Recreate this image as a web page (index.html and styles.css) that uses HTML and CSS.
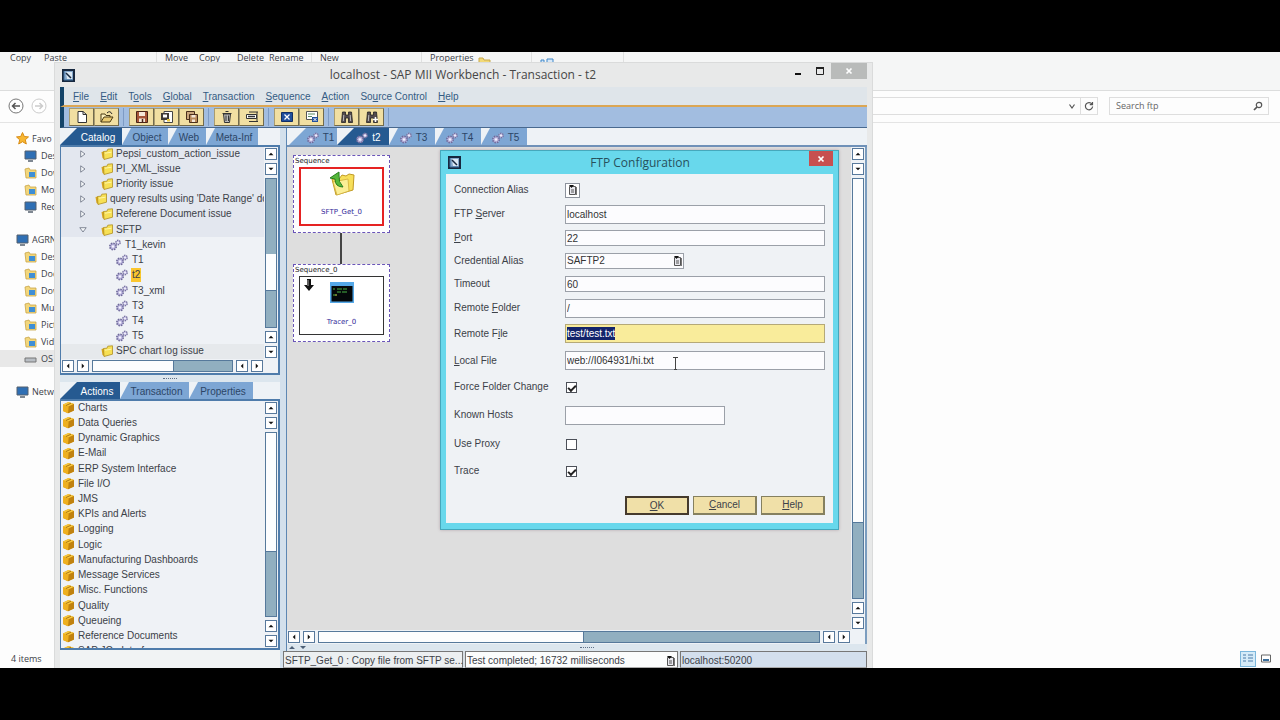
FILE: index.html
```html
<!DOCTYPE html>
<html lang="en">
<head>
<meta charset="utf-8">
<title>SAP MII Workbench</title>
<link rel="stylesheet" href="styles.css">
</head>
<body>
<svg class="sprites" aria-hidden="true">
  <symbol id="gear" viewBox="0 0 14 12"><circle cx="5" cy="7.500" r="3.200" fill="#b9b3dc" stroke="#6e6a9a" stroke-width="1.600" stroke-dasharray="1.500 1"/><circle cx="5" cy="7.500" r="1.200" fill="#f4f2ff"/><circle cx="10" cy="3.500" r="2.200" fill="#c9c3e8" stroke="#77739f" stroke-width="1.400" stroke-dasharray="1.300 .8"/><circle cx="10" cy="3.500" r=".8" fill="#fff"/></symbol>
  <symbol id="folder" viewBox="0 0 12 12"><path d="M.5 4l2.500-.5v7.500l-1.500-1z" fill="#d8a51c"/><path d="M2.500 3.500l3.500-.3.800-2L11.500.8v8.400L3 11.500z" fill="#f7e055" stroke="#b08f22" stroke-width=".8"/><path d="M4 5.200l6.500-1" stroke="#fff6a8"/></symbol>
  <symbol id="cube" viewBox="0 0 13 13"><path d="M1 3.500L6.500 1 12 3v6.500L6 12.300 1 10z" fill="#e0a010"/><path d="M1 3.500L6.500 1 12 3 6.500 5.500z" fill="#f6c63c"/><path d="M6.500 5.500L12 3v6.500L6 12.300z" fill="#c08210"/><path d="M1 3.500l5.500 2L6 12.300 1 10z" fill="#eeb020"/><path d="M4 4.500l5-2.300" stroke="#98630a" stroke-width=".8"/></symbol>
  <symbol id="up" viewBox="0 0 12 12"><path d="M3 7.500h6L6 4.500z" fill="#111"/></symbol>
  <symbol id="down" viewBox="0 0 12 12"><path d="M3 4.500h6L6 7.500z" fill="#111"/></symbol>
  <symbol id="left" viewBox="0 0 12 12"><path d="M7.500 3v6L4.500 6z" fill="#111"/></symbol>
  <symbol id="right" viewBox="0 0 12 12"><path d="M4.500 3v6L7.500 6z" fill="#111"/></symbol>
  <symbol id="app" viewBox="0 0 13 13"><path d="M0 0h13v13H0z" fill="#17283f"/><path d="M2 2h9v9H2z" fill="#86a9cc"/><path d="M4 3h6v7H5z" fill="#dce9f4"/><path d="M4 4l5 5" stroke="#17283f" stroke-width="1.500"/><path d="M2 2v9h9" fill="none" stroke="#3d6c9b"/></symbol>
  <symbol id="pick" viewBox="0 0 9 10"><path d="M1.500 1.500h6v8h-6z" fill="#e8e8ee" stroke="#555"/><path d="M1 0h5L3.500 3z" fill="#111"/><path d="M3 5h3M3 7h3" stroke="#555"/><path d="M8.500 2v8" stroke="#777"/></symbol>
  <symbol id="closed" viewBox="0 0 6 8"><path d="M.7.8v6.400L5 4z" fill="#f5f7fa" stroke="#687080" stroke-width=".8"/></symbol>
  <symbol id="opened" viewBox="0 0 8 6"><path d="M.8.7h6.400L4 5z" fill="#f5f7fa" stroke="#687080" stroke-width=".8"/></symbol>
  <symbol id="place" viewBox="0 0 13 12"><path d="M1 2l4-1 1 2h6v8H2z" fill="#f3d77c" stroke="#c9a548" stroke-width=".8"/><path d="M5 5h6v5H5z" fill="#3f8fd6"/></symbol>
  <symbol id="monitor" viewBox="0 0 13 12"><path d="M1 1h11v8H1z" fill="#2f6fb4" stroke="#55606e"/><path d="M4 11h5" stroke="#55606e" stroke-width="1.500"/></symbol>
</svg>

<main class="desktop">
  <section class="explorer" aria-label="File explorer">
    <div class="ribbon">
      <button class="rb">Copy</button><button class="rb rb-paste">Paste</button><span class="sep"></span><button class="rb">Move</button><button class="rb rb-copy">Copy</button><button class="rb rb-del">Delete</button><button class="rb rb-ren">Rename</button><span class="sep"></span><button class="rb rb-new">New</button><span class="sep tight"></span><button class="rb rb-prop">Properties</button>
      <svg class="rb-bit" width="14" height="11" viewBox="0 0 14 11"><path d="M1 6h4l1 2h6v6H1z" fill="#f2d976" stroke="#c7a94d"/></svg>
      <span class="sep"></span>
      <svg class="rb-bit2" width="14" height="11" viewBox="0 0 14 11"><path d="M1 8h3v4H1zM7 7h6v7H7z" fill="#d7e8f8" stroke="#3c86c8"/></svg>
      <span class="sep"></span>
    </div>
    <div class="address">
      <button class="nav-btn" aria-label="Back"><svg width="16" height="16" viewBox="0 0 16 16"><circle cx="8" cy="8" r="7" fill="#fff" stroke="#777"/><path d="M12 8H4.500M7.500 5l-3 3 3 3" fill="none" stroke="#555" stroke-width="1.500"/></svg></button>
      <button class="nav-btn" aria-label="Forward"><svg width="16" height="16" viewBox="0 0 16 16"><circle cx="8" cy="8" r="7" fill="#fff" stroke="#ccc"/><path d="M4 8h7.500M8.500 5l3 3-3 3" fill="none" stroke="#ccc" stroke-width="1.500"/></svg></button>
      <div class="path">
        <button class="path-btn" aria-label="History"><svg width="8" height="8" viewBox="0 0 8 8"><path d="M1.500 2.500L4 6l2.500-3.500" fill="none" stroke="#555" stroke-width="1.200"/></svg></button>
        <button class="path-btn refresh" aria-label="Refresh"><svg width="10" height="10" viewBox="0 0 10 10"><path d="M8 3.200A3.600 3.600 0 1 0 8.600 5.500M8.500 1v2.700H5.800" fill="none" stroke="#555" stroke-width="1.200"/></svg></button>
      </div>
      <div class="search"><input type="text" aria-label="Search ftp" placeholder="Search ftp"><svg width="10" height="10" viewBox="0 0 10 10"><circle cx="6" cy="4" r="2.700" fill="none" stroke="#555" stroke-width="1.200"/><path d="M4 6L1 9" stroke="#555" stroke-width="1.700"/></svg></div>
    </div>
    <ul class="places">
      <li class="head"><svg width="13" height="13" viewBox="0 0 13 13"><path d="M6.500.5l1.800 4 4.200.4-3.200 2.900 1 4.200-3.800-2.300L2.700 12l1-4.200L.5 4.900l4.200-.4z" fill="#f7b733" stroke="#d98c14"/></svg>Favo</li>
      <li><svg width="13" height="12"><use href="#monitor"/></svg>Des</li>
      <li><svg width="13" height="12"><use href="#place"/></svg>Dow</li>
      <li><svg width="13" height="12"><use href="#place"/></svg>Mob</li>
      <li><svg width="13" height="12"><use href="#monitor"/></svg>Rec</li>
      <li class="head gap"><svg width="13" height="12"><use href="#monitor"/></svg>AGRN</li>
      <li><svg width="13" height="12"><use href="#place"/></svg>Des</li>
      <li><svg width="13" height="12"><use href="#place"/></svg>Doc</li>
      <li><svg width="13" height="12"><use href="#place"/></svg>Dow</li>
      <li><svg width="13" height="12"><use href="#place"/></svg>Mus</li>
      <li><svg width="13" height="12"><use href="#place"/></svg>Pict</li>
      <li><svg width="13" height="12"><use href="#place"/></svg>Vide</li>
      <li class="current"><svg width="13" height="12" viewBox="0 0 13 12"><path d="M1 5h11v4H1z" fill="#b9bec4" stroke="#777"/></svg>OS (</li>
      <li class="head gap"><svg width="13" height="12"><use href="#monitor"/></svg>Netw</li>
    </ul>
    <div class="ex-status"><span>4 items</span>
      <div class="views"><button class="view on" aria-label="Details"><svg width="12" height="11" viewBox="0 0 12 11"><path d="M1 2h3M1 5h3M1 8h3M6 2h5M6 5h5M6 8h5" stroke="#4a7ba8"/></svg></button><button class="view" aria-label="Large icons"><svg width="12" height="11" viewBox="0 0 12 11"><path d="M1.500 2h9v7h-9z" fill="#fff" stroke="#666"/><path d="M3 6h6v2H3z" fill="#3b6e9b"/></svg></button></div>
    </div>
  </section>

  <section class="window" aria-label="SAP MII Workbench">
    <header class="titlebar">
      <svg width="13" height="13"><use href="#app"/></svg>
      <h1>localhost - SAP MII Workbench - Transaction - t2</h1>
      <div class="win-ctl"><button aria-label="Minimize"><svg width="10" height="10" viewBox="0 0 10 10"><path d="M2 8h6" stroke="#111" stroke-width="2"/></svg></button><button aria-label="Maximize"><svg width="10" height="10" viewBox="0 0 10 10"><path d="M1.500 2.500h7v6h-7z" fill="none" stroke="#222"/><path d="M1 2h8" stroke="#222" stroke-width="2"/></svg></button><button class="close" aria-label="Close"><svg width="10" height="10" viewBox="0 0 10 10"><path d="M2.500 2.500l5 5M7.500 2.500l-5 5" stroke="#fff" stroke-width="1.700"/></svg></button></div>
    </header>
    <nav class="menu"><button><u>F</u>ile</button><button><u>E</u>dit</button><button>T<u>o</u>ols</button><button><u>G</u>lobal</button><button><u>T</u>ransaction</button><button><u>S</u>equence</button><button><u>A</u>ction</button><button>So<u>u</u>rce Control</button><button><u>H</u>elp</button></nav>
    <div class="toolbar">
      <div class="group">
        <button aria-label="New"><svg width="14" height="14" viewBox="0 0 14 14"><path d="M3 1.500h5l3.500 3V12.500H3z" fill="#fff" stroke="#333"/><path d="M8 1.500v3h3.500" fill="none" stroke="#333"/></svg></button>
        <button aria-label="Open"><svg width="14" height="14" viewBox="0 0 14 14"><path d="M1 12V4h4l1 1.500h4V7" fill="#fff3c0" stroke="#4a3b14"/><path d="M1 12l3-5h9l-3 5z" fill="#eacb72" stroke="#4a3b14"/><path d="M7 3q3-3 5 1" fill="none" stroke="#222"/></svg></button>
      </div>
      <div class="group">
        <button aria-label="Save"><svg width="14" height="14" viewBox="0 0 14 14"><path d="M1.500 1.500h11v11h-11z" fill="#a65639" stroke="#4a2418"/><path d="M4 2h6v4H4zM4 8.500h6V12H4z" fill="#f6e8d8"/><path d="M7.500 9v3" stroke="#4a2418" stroke-width="1.500"/></svg></button>
        <button aria-label="Save as"><svg width="14" height="14" viewBox="0 0 14 14"><path d="M4 1.500h8.500v11H4z" fill="#fff" stroke="#444"/><path d="M1 3h8v7H1z" fill="#3f3a36"/><path d="M3 4.500h4v3H3z" fill="#fff"/><path d="M7 9h3v2.500H7z" fill="#e8c840"/></svg></button>
        <button aria-label="Save all"><svg width="14" height="14" viewBox="0 0 14 14"><path d="M1.500 1.500h8v8h-8z" fill="#c9a57c" stroke="#4a2f1c"/><path d="M4.500 4.500h8v8h-8z" fill="#b98a5c" stroke="#4a2f1c"/><path d="M6.500 5h4v2.500h-4zM7 9.500h3V12H7z" fill="#f6e8d8"/></svg></button>
      </div>
      <div class="group">
        <button aria-label="Delete"><svg width="14" height="14" viewBox="0 0 14 14"><path d="M3.500 4h7l-1 8.500h-5z" fill="#bbb" stroke="#333"/><path d="M2.500 3.500h9M5.500 1.500h3M6 5.500v5.500M8.500 5.500v5.500" stroke="#333" fill="none"/></svg></button>
        <button aria-label="Rename"><svg width="14" height="14" viewBox="0 0 14 14"><path d="M1.500 4.500h10v4h-10z" fill="#fff" stroke="#333"/><path d="M3 6.500h7" stroke="#333" stroke-width="1.500"/><path d="M4 2h9M12 2v10M4 11.500h9" stroke="#333"/></svg></button>
      </div>
      <div class="group">
        <button aria-label="Close transaction"><svg width="14" height="14" viewBox="0 0 14 14"><path d="M1.500 2.500h11v9h-11z" fill="#214f9c" stroke="#132f63"/><path d="M4.500 4.500l5 5M9.500 4.500l-5 5" stroke="#fff" stroke-width="1.300"/></svg></button>
        <button aria-label="Close all"><svg width="14" height="14" viewBox="0 0 14 14"><path d="M1.500 1.500h11v8h-11z" fill="#fff" stroke="#555"/><path d="M3 4h7M3 6.500h4" stroke="#5b8a62"/><path d="M7 7h6v5H7z" fill="#214f9c"/><path d="M8.500 8l3 3M11.500 8l-3 3" stroke="#fff"/></svg></button>
      </div>
      <div class="group">
        <button aria-label="Find"><svg width="14" height="14" viewBox="0 0 14 14"><path d="M2.500 2h3v3h3V2h3l1 10.500H8.500V8h-3v4.500h-4z" fill="#544b50" stroke="#222" stroke-width=".8"/><path d="M3.800 5l-.5 6M10.200 5l.5 6" stroke="#bbb"/></svg></button>
        <button aria-label="Find next"><svg width="14" height="14" viewBox="0 0 14 14"><path d="M2.500 2h3v3h3V2h3l1 10.500H8.500V8h-3v4.500h-4z" fill="#544b50" stroke="#222" stroke-width=".8"/><path d="M3.800 5l-.5 6" stroke="#bbb"/><path d="M10.500 7v5M8 9.500h5" stroke="#fff" stroke-width="1.500"/></svg></button>
      </div>
    </div>
    <div class="work">
      <aside class="side">
        <div class="tabs"><button class="tab on w62">Catalog</button><button class="tab w46">Object</button><button class="tab w38">Web</button><button class="tab w52">Meta-Inf</button></div>
        <div class="panel tree-panel">
          <div class="scroll-row">
            <ul class="tree">
              <li class="f"><svg class="tw" width="8" height="8"><use href="#closed"/></svg><svg width="12" height="12"><use href="#folder"/></svg>Pepsi_custom_action_issue</li>
              <li class="f"><svg class="tw" width="8" height="8"><use href="#closed"/></svg><svg width="12" height="12"><use href="#folder"/></svg>PI_XML_issue</li>
              <li class="f"><svg class="tw" width="8" height="8"><use href="#closed"/></svg><svg width="12" height="12"><use href="#folder"/></svg>Priority issue</li>
              <li class="f near"><svg class="tw" width="8" height="8"><use href="#closed"/></svg><svg width="12" height="12"><use href="#folder"/></svg>query results using 'Date Range' do</li>
              <li class="f"><svg class="tw" width="8" height="8"><use href="#closed"/></svg><svg width="12" height="12"><use href="#folder"/></svg>Referene Document issue</li>
              <li class="f"><svg class="tw" width="8" height="6"><use href="#opened"/></svg><svg width="12" height="12"><use href="#folder"/></svg>SFTP</li>
              <li class="t out"><svg width="14" height="12"><use href="#gear"/></svg>T1_kevin</li>
              <li class="t"><svg width="14" height="12"><use href="#gear"/></svg>T1</li>
              <li class="t marked"><svg width="14" height="12"><use href="#gear"/></svg><mark>t2</mark></li>
              <li class="t"><svg width="14" height="12"><use href="#gear"/></svg>T3_xml</li>
              <li class="t"><svg width="14" height="12"><use href="#gear"/></svg>T3</li>
              <li class="t"><svg width="14" height="12"><use href="#gear"/></svg>T4</li>
              <li class="t"><svg width="14" height="12"><use href="#gear"/></svg>T5</li>
              <li class="f plain"><svg width="12" height="12"><use href="#folder"/></svg>SPC chart log issue</li>
            </ul>
            <div class="sb v"><button aria-label="Up"><svg><use href="#up"/></svg></button><button aria-label="Down"><svg><use href="#down"/></svg></button><div class="track t1"><div class="thumb"></div></div><button aria-label="Up"><svg><use href="#up"/></svg></button><button aria-label="Down"><svg><use href="#down"/></svg></button></div>
          </div>
          <div class="sb h end15"><button aria-label="Left"><svg><use href="#left"/></svg></button><button aria-label="Right"><svg><use href="#right"/></svg></button><div class="track t2"><div class="thumb"></div></div><button aria-label="Left"><svg><use href="#left"/></svg></button><button aria-label="Right"><svg><use href="#right"/></svg></button></div>
        </div>
        <div class="split-h"></div>
        <div class="tabs"><button class="tab on w60">Actions</button><button class="tab w69">Transaction</button><button class="tab w64">Properties</button></div>
        <div class="panel action-panel">
          <ul class="actions">
            <li><svg width="13" height="13"><use href="#cube"/></svg>Charts</li>
            <li><svg width="13" height="13"><use href="#cube"/></svg>Data Queries</li>
            <li><svg width="13" height="13"><use href="#cube"/></svg>Dynamic Graphics</li>
            <li><svg width="13" height="13"><use href="#cube"/></svg>E-Mail</li>
            <li><svg width="13" height="13"><use href="#cube"/></svg>ERP System Interface</li>
            <li><svg width="13" height="13"><use href="#cube"/></svg>File I/O</li>
            <li><svg width="13" height="13"><use href="#cube"/></svg>JMS</li>
            <li><svg width="13" height="13"><use href="#cube"/></svg>KPIs and Alerts</li>
            <li><svg width="13" height="13"><use href="#cube"/></svg>Logging</li>
            <li><svg width="13" height="13"><use href="#cube"/></svg>Logic</li>
            <li><svg width="13" height="13"><use href="#cube"/></svg>Manufacturing Dashboards</li>
            <li><svg width="13" height="13"><use href="#cube"/></svg>Message Services</li>
            <li><svg width="13" height="13"><use href="#cube"/></svg>Misc. Functions</li>
            <li><svg width="13" height="13"><use href="#cube"/></svg>Quality</li>
            <li><svg width="13" height="13"><use href="#cube"/></svg>Queueing</li>
            <li><svg width="13" height="13"><use href="#cube"/></svg>Reference Documents</li>
            <li><svg width="13" height="13"><use href="#cube"/></svg>SAP JCo Interface</li>
          </ul>
          <div class="sb v"><button aria-label="Up"><svg><use href="#up"/></svg></button><button aria-label="Down"><svg><use href="#down"/></svg></button><div class="track t3"><div class="thumb"></div></div><button aria-label="Up"><svg><use href="#up"/></svg></button><button aria-label="Down"><svg><use href="#down"/></svg></button></div>
        </div>
      </aside>
      <div class="split-v"></div>
      <section class="editor">
        <div class="tabs docs"><button class="tab first">T1</button><button class="tab on w52"><svg width="14" height="12"><use href="#gear"/></svg>t2</button><button class="tab w46"><svg width="14" height="12"><use href="#gear"/></svg>T3</button><button class="tab w46"><svg width="14" height="12"><use href="#gear"/></svg>T4</button><button class="tab w46"><svg width="14" height="12"><use href="#gear"/></svg>T5</button></div>
        <div class="canvas-box">
          <div class="scroll-row">
            <div class="canvas">
              <div class="seq"><span>Sequence</span>
                <div class="node picked"><svg width="28" height="26" viewBox="0 0 28 26"><path d="M4 8l7 0 3-4 4 1 3-2 5 1-1 15-17 5z" fill="#f7df5a" stroke="#c19a24"/><path d="M5 11l15-3 1 12-12 4z" fill="#fbee96" stroke="#d0ae3a" stroke-width=".8"/><path d="M2 7l9-6v3q-1 7 4 12-8 0-8-8z" fill="#55b83a" stroke="#267c1c"/></svg><b>SFTP_Get_0</b></div>
              </div>
              <div class="wire"></div>
              <div class="seq"><span>Sequence_0</span>
                <div class="node"><svg class="arrow" width="10" height="12" viewBox="0 0 10 12"><path d="M3 0h4v6h3l-5 6-5-6h3z" fill="#111"/><path d="M4 1v6" stroke="#aaa"/></svg><svg width="24" height="21" viewBox="0 0 24 21"><path d="M0 0h24v21H0z" fill="#55a8e8"/><path d="M1.500 4h21v15.500h-21z" fill="#05080a"/><path d="M3 7h2M7 7h5M13 7h4M7 10h4M12 10h5M3 13h2" stroke="#49b345"/><path d="M6 12v2" stroke="#d7e54a"/></svg><b>Tracer_0</b></div>
              </div>
            </div>
            <div class="sb v"><button aria-label="Up"><svg><use href="#up"/></svg></button><button aria-label="Down"><svg><use href="#down"/></svg></button><div class="track t4"><div class="thumb"></div></div><button aria-label="Up"><svg><use href="#up"/></svg></button><button aria-label="Down"><svg><use href="#down"/></svg></button></div>
          </div>
          <div class="sb h end15"><button aria-label="Left"><svg><use href="#left"/></svg></button><button aria-label="Right"><svg><use href="#right"/></svg></button><div class="track t5"><div class="thumb"></div></div><button aria-label="Left"><svg><use href="#left"/></svg></button><button aria-label="Right"><svg><use href="#right"/></svg></button></div>
        </div>
        <div class="split-h low"><svg width="20" height="5" viewBox="0 0 20 5"><path d="M2 4h6L5 1zM13 1h6l-3 3z" fill="#4d6077"/></svg></div>
        <footer class="status"><span class="s1">SFTP_Get_0 : Copy file from SFTP se...</span><span class="s2"><i>Test completed; 16732 milliseconds</i><svg width="9" height="10"><use href="#pick"/></svg></span><span class="s3">localhost:50200</span></footer>
      </section>
    </div>
  </section>

  <form class="dialog" aria-label="FTP Configuration">
    <header><svg width="13" height="13"><use href="#app"/></svg><h2>FTP Configuration</h2><button type="button" class="x" aria-label="Close"><svg width="10" height="10" viewBox="0 0 10 10"><path d="M2.500 2.500l5 5M7.500 2.500l-5 5" stroke="#fff" stroke-width="1.700"/></svg></button></header>
    <div class="body">
      <div class="fields">
        <label for="alias">Connection Alias</label><button id="alias" class="picker" type="button" aria-label="Connection Alias"><svg width="9" height="10"><use href="#pick"/></svg></button>
        <label for="server">FTP <u>S</u>erver</label><input id="server" type="text" class="tall" value="localhost">
        <label for="port"><u>P</u>ort</label><input id="port" type="text" value="22">
        <label for="cred">Credential Alias</label><div class="combo"><input id="cred" type="text" value="SAFTP2"><svg width="9" height="10"><use href="#pick"/></svg></div>
        <label for="timeout">Timeout</label><input id="timeout" type="text" value="60">
        <label for="rfolder">Remote <u>F</u>older</label><input id="rfolder" type="text" class="tall" value="/">
        <label for="rfile">Remote F<u>i</u>le</label><div id="rfile" class="edit tall" role="textbox" contenteditable="true" aria-label="Remote File"><span>test/test.txt</span></div>
        <label for="lfile"><u>L</u>ocal File</label><input id="lfile" type="text" class="tall" value="web://I064931/hi.txt">
        <label for="force">Force Folder Change</label><input id="force" type="checkbox" checked>
        <label for="hosts">Known Hosts</label><input id="hosts" type="text" class="tall short">
        <label for="proxy">Use Proxy</label><input id="proxy" type="checkbox">
        <label for="trace">Trace</label><input id="trace" type="checkbox" checked>
      </div>
      <div class="buttons"><button type="button" class="default"><u>O</u>K</button><button type="button"><u>C</u>ancel</button><button type="button"><u>H</u>elp</button></div>
    </div>
    <svg class="caret" width="7" height="13" viewBox="0 0 7 13"><path d="M1 .5h5M3.500 1v11.500M2 12.500h3" stroke="#444" fill="none"/></svg>
  </form>
</main>
<script src="tabs.js"></script>
</body>
</html>
```
FILE: tabs.js
```js
// Every document tab carries the transaction icon before its name.
document.querySelectorAll(".docs .tab").forEach(function (tab) {
  if (!tab.querySelector("svg")) {
    tab.insertAdjacentHTML("afterbegin", '<svg width="14" height="12"><use href="#gear"/></svg>');
  }
});
```
FILE: styles.css
```css
* { box-sizing: border-box; }
body { margin: 0; height: 100vh; padding: 52px 0; background: #000; font: 10px/12px "Liberation Sans", Arial, sans-serif; color: #3c4148; }
button, input { font: inherit; color: inherit; margin: 0; padding: 0; border: 0; border-radius: 0; background: none; }
ul { list-style: none; margin: 0; padding: 0; }
svg { display: block; flex: none; }
.sprites { position: absolute; width: 0; height: 0; }
.desktop { position: relative; height: 100%; overflow: hidden; background: #fdfdfd; }

/* File explorer behind the workbench */
.explorer { height: 100%; display: flex; flex-direction: column; font-family: "Open Sans", "Noto Sans", sans-serif; font-size: 9px; }
.ribbon { height: 39px; display: flex; align-items: flex-start; background: #f5f6f6; border-bottom: 1px solid #dcdddd; padding-left: 10px; }
.rb { text-align: left; line-height: 12px; width: 34px; flex: none; }
.rb-paste { width: 112px; }
.rb-copy { width: 38px; }
.rb-del { width: 32px; }
.rb-ren { width: 42px; }
.rb-new { width: 101px; }
.rb-prop { width: 48px; }
.sep { width: 1px; height: 39px; margin-right: 8px; background: #dfe0e0; }
.rb-bit { margin-right: 39px; }
.rb-bit2 { margin-right: 69px; }
.address { height: 32px; display: flex; align-items: center; gap: 7px; padding: 0 11px 2px 8px; border-bottom: 1px solid #e4e4e4; }
.path { flex: 1; height: 18px; display: flex; justify-content: flex-end; border: 1px solid #dedede; margin-right: 4px; }
.path-btn { width: 17px; display: grid; place-items: center; }
.refresh { border-left: 1px solid #dedede; }
.search { width: 160px; height: 18px; display: flex; align-items: center; border: 1px solid #dedede; padding: 0 5px 0 6px; }
.search input { flex: 1; min-width: 0; outline: 0; }
.search input::placeholder { color: #666; opacity: 1; }
.places { flex: 1; padding-top: 7px; }
.places li { height: 17px; display: flex; align-items: center; gap: 4px; padding-left: 24px; }
.places .head { padding-left: 16px; gap: 3px; }
.places .gap { margin-top: 16px; }
.places .current { background: linear-gradient(90deg, #e8e8e8 60px, transparent 60px); }
.ex-status { height: 19px; display: flex; justify-content: space-between; padding: 0 6px 0 11px; align-items: center; }
.views { display: flex; gap: 2px; }
.view { width: 16px; height: 16px; display: grid; place-items: center; }
.view.on { background: #d5ebf8; border: 1px solid #7cb7dc; }

/* Workbench window */
.window { position: absolute; left: 54px; top: 10px; bottom: 0; width: 819px; display: flex; flex-direction: column; background: #e8e9e9; padding: 0 5px; border: 1px solid #dadbdb; border-bottom: 0; }
.titlebar { height: 24px; flex: none; display: flex; align-items: center; padding-left: 2px; }
h1, h2 { margin: 0; flex: 1; text-align: center; font-weight: 400; font-size: 12px; color: #464646; font-family: "Open Sans", "Noto Sans", sans-serif; }
.titlebar h1 { padding-left: 64px; }
.win-ctl { display: flex; align-self: flex-start; }
.win-ctl button { width: 22px; height: 16px; display: grid; place-items: center; }
.win-ctl .close { width: 36px; background: #b9bbba; }
.menu { height: 20px; flex: none; display: flex; align-items: center; gap: 11px; padding: 2px 0 0 9px; border-left: 4px solid #144469; border-bottom: 2px solid #dba654; background: #dfe5ea; color: #345b83; }
.toolbar { height: 21px; flex: none; display: flex; align-items: center; gap: 5px; padding-left: 5px; border-left: 4px solid #144469; background: #a2bde0; border-bottom: 1px solid #49698f; }
.group { display: flex; padding-right: 4px; border-right: 1px solid #7e9bc4; }
.toolbar button { width: 25px; height: 18px; display: grid; place-items: center; background: #f1dfa2; border: 1px solid #716a4d; border-top-color: #a99c70; border-left-color: #a99c70; }
.work { flex: 1; min-height: 0; display: flex; background: #d9e4ee; }
.side { width: 220px; flex: none; display: flex; flex-direction: column; padding-bottom: 18px; background: #f1f3f4; }
.tabs { height: 17px; flex: none; display: flex; background: #eef2f6; }
.tab { background: #7da6d4; clip-path: polygon(9px 0, 100% 0, 100% 100%, 0 100%); color: #2c4566; padding: 2px 0 0 4px; text-align: center; display: flex; align-items: center; justify-content: center; gap: 3px; }
.tab.on { background: #265a91; color: #fff; clip-path: polygon(17px 0, 100% 0, 100% 100%, 0 100%); padding-left: 14px; }
.w38 { width: 38px; }
.w46 { width: 46px; }
.w52 { width: 52px; }
.w60 { width: 60px; }
.w62 { width: 62px; }
.w64 { width: 64px; }
.w69 { width: 69px; }
.panel { border: 2px solid #4f7cab; border-left-width: 1px; background: #eff2f6; overflow: hidden; }
.tree-panel { height: 230px; flex: none; display: flex; flex-direction: column; }
.scroll-row { flex: 1; min-height: 0; display: flex; }
.tree { flex: 1; min-width: 0; display: flex; flex-direction: column; margin-top: -1px; }
.tree li { flex: 1; display: flex; align-items: center; gap: 3px; white-space: nowrap; overflow: hidden; }
.f { background: #e3e7ef; padding-left: 18px; }
.f .tw { margin-right: 11px; }
.f.near .tw { margin-right: 5px; }
.tree .plain { padding-left: 40px; background: #e6e9ec; }
.tree .t { padding-left: 54px; }
.tree .out { padding-left: 47px; }
mark { background: #fbc62e; color: inherit; padding: 0 1px; line-height: 14px; }
.tree .marked { gap: 2px; }
.sb { display: flex; gap: 3px; flex: none; padding: 1px; }
.sb button { width: 12px; height: 12px; flex: none; border: 1px solid #58799c; background: #fff; overflow: hidden; }
.sb button svg { width: 10px; height: 10px; }
.v { width: 14px; flex-direction: column; }
.h { height: 14px; }
.end15 { padding-right: 15px; }
.track { flex: 1; min-height: 0; display: flex; background: #91afc0; border: 1px solid #56799b; }
.thumb { background: #fcfdfe; }
.v .thumb { width: 100%; border-bottom: 1px solid #56799b; }
.h .thumb { border-right: 1px solid #56799b; }
.v .track { flex-direction: column; }
.t1 { padding-top: 75px; }
.t1 .thumb { height: 37px; flex: none; }
.t2 .thumb { width: 58%; }
.t3 .thumb { height: 65%; }
.t4 .thumb { height: 82%; }
.t5 .thumb { width: 53%; }
.split-h { height: 7px; flex: none; display: flex; justify-content: center; align-items: center; background: #dce6ee; }
.split-h::after { content: ""; width: 14px; border-bottom: 1px dotted #5d7088; }
.low svg { margin-right: auto; }
.low::after { margin-right: auto; }
.action-panel { flex: 1; min-height: 0; display: flex; }
.actions { flex: 1; display: grid; grid-template-rows: repeat(17, 1fr); margin: -1px 0 -11px; padding-left: 1px; }
.actions li { display: flex; align-items: center; gap: 3px; white-space: nowrap; min-height: 0; }
.split-v { width: 7px; flex: none; background: #d3e0ec; border-right: 1px solid #5d87b3; }
.editor { flex: 1; min-width: 0; display: flex; flex-direction: column; }
.docs { height: 19px; padding-left: 2px; border-bottom: 2px solid #6f91b8; }
.docs .tab { padding-left: 2px; }
.docs .on { padding-left: 10px; }
.docs .first { width: 48px; padding-left: 14px; clip-path: polygon(17px 0, 100% 0, 100% 100%, 0 100%); }
.canvas-box { flex: 1; min-height: 0; display: flex; flex-direction: column; background: #eef2f6; border-right: 2px solid #7b9dbf; }
.canvas { flex: 1; background: #dedede; display: flex; flex-direction: column; align-items: flex-start; padding: 8px 6px; }
.seq { width: 97px; height: 78px; padding: 0 5px; background: #fdfdfe; border: 1px dashed #6a55b8; font: 7px/10px "DejaVu Sans", sans-serif; color: #222; display: flex; flex-direction: column; }
.seq span { margin-left: -4px; height: 11px; }
.node { position: relative; height: 59px; border: 1px solid #333; display: flex; flex-direction: column; align-items: center; justify-content: space-between; padding: 5px 0 7px; background: #fff; }
.node.picked { border: 2px solid #e52222; padding-top: 2px; }
.node b { font-weight: 400; color: #332a9a; }
.arrow { position: absolute; left: 4px; top: 2px; }
.wire { width: 2px; height: 31px; margin-left: 47px; background: #444; }
.status { height: 17px; flex: none; display: flex; gap: 2px; margin-left: -4px; background: #d7dee4; }
.status > span { border: 1px solid #777; border-bottom-color: #aaa; display: flex; align-items: center; padding: 2px 2px 0 1px; white-space: nowrap; background: #eceff1; }
.status i { font-style: normal; }
.status .s1 { width: 180px; padding-right: 0; }
.status .s2 { width: 213px; justify-content: space-between; background: #fbfcfc; }
.status .s3 { flex: 1; background: #d3dfed; }

/* FTP dialog */
.dialog { position: absolute; left: 440px; top: 98px; width: 399px; display: flex; flex-direction: column; background: #68d8ec; border: 1px solid #45a8bc; padding: 0 5px 6px; box-shadow: 0 0 3px #b9a9b0; }
.dialog header { height: 23px; display: flex; align-items: center; padding-left: 2px; }
.dialog h2 { color: #27515c; padding-left: 10px; }
.x { width: 24px; height: 15px; align-self: flex-start; background: #c75050; display: grid; place-items: center; }
.body { background: #eff2f5; padding: 4px 8px 8px; }
.fields { display: grid; grid-template-columns: 111px 1fr; grid-template-rows: 24px 24px 24px 22px 24px 24px 27px 27px 26px 30px 28px 26px; align-items: center; }
.fields input[type="text"], .edit, .combo { width: 100%; height: 16px; border: 1px solid #9ba0a8; background: #fcfcfe; padding: 0 1px; outline: 0; color: #333; }
.fields .tall, .fields input.tall[type="text"] { height: 19px; }
.fields input.short[type="text"] { width: 160px; }
.fields .combo { width: 119px; display: flex; align-items: center; }
.fields .combo input[type="text"] { flex: 1; width: 0; border: 0; padding: 0; height: 12px; }
.edit { line-height: 17px; }
.fields .edit { background: #f9ec9b; border-color: #b5a978; }
.edit span { background: #13246b; color: #fff; padding: 1px 0; }
.picker { width: 15px; height: 15px; border: 1px solid #8c929c; background: #fff; display: grid; place-items: center; }
input[type="checkbox"] { appearance: none; width: 11px; height: 11px; margin-left: 1px; border: 1px solid #4c5058; background: #fff; }
input[type="checkbox"]:checked::after { content: ""; display: block; width: 6px; height: 3px; margin: 2px 0 0 1px; border: solid #222; border-width: 0 0 2px 2px; transform: rotate(-45deg); }
.buttons { display: flex; justify-content: flex-end; gap: 4px; padding-top: 12px; }
.buttons button { width: 64px; height: 19px; background: #f0e0a8; border: 1px solid #85805f; border-width: 1px 2px 2px 1px; }
.buttons .default { border: 2px solid #453a2c; }
.caret { position: absolute; left: 231px; top: 206px; }
```
